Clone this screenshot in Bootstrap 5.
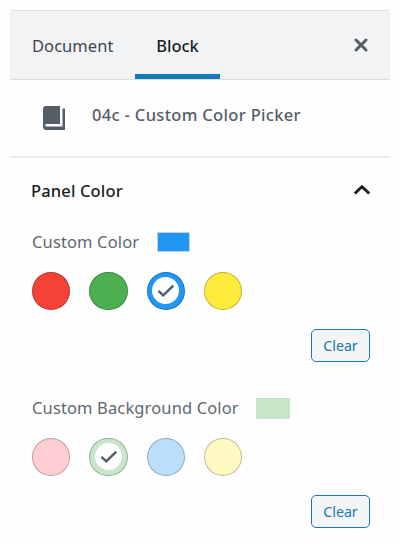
<!DOCTYPE html>
<html lang="en">
<head>
<meta charset="utf-8">
<meta name="viewport" content="width=device-width, initial-scale=1">
<title>Block settings</title>
<link href="https://cdn.jsdelivr.net/npm/bootstrap@5.3.0/dist/css/bootstrap.min.css" rel="stylesheet">
<style>
body{font-family:"Noto Sans","Open Sans",sans-serif;font-size:16.5px;color:#555d66;background:#fefefe;line-height:24px}
.sidebar{width:380px;margin:10px 0 0 10px}
.tabs{height:70px;background:#f2f3f5;border-top:1px solid #e0e2e5;border-bottom:1px solid #dcdee1}
.tab-btn{border:0;background:none;padding:2px 0 0;color:#40464d;text-align:left}
.tab-doc{width:125px;padding-left:22px;letter-spacing:.05px}
.tab-block{width:85px;padding-top:7px;text-align:center;color:#191e23;font-weight:500;border-bottom:5px solid #117cb8}
.close-btn{border:0;background:none;padding:0;margin-right:21px}
.block-info{height:78px;border-bottom:2px solid #ebebec;padding-left:33px}
.block-name{font-size:16.5px;font-weight:500;line-height:24px;letter-spacing:.33px;margin:-6px 0 0 27px;color:#555d66}
.panel-toggle{height:66px;padding:0 20px 0 21px;border:0;background:none;color:#191e23;font-weight:500;letter-spacing:.15px}
.panel-toggle svg{margin-top:-3px}
.setting{height:166px;padding:6px 20px 0 22px}
.setting-label{height:24px;color:#606870;letter-spacing:.13px}
.indicator{width:33px;height:20px;margin-left:18px;border:1px solid #bcd2e6}
.indicator-lg{width:34px;height:21px;margin-left:17px;border-color:#c8e4c9}
.swatches{margin-top:17.5px;gap:19.1px}
.swatch{width:38.3px;height:38.3px;border:1.4px solid rgba(0,0,0,.24);padding:0}
.swatch svg{width:27px;height:27px}
.clear-btn{width:59px;height:33px;margin-top:19.2px;padding:0;border:1.5px solid #1878b0;border-radius:5px;background:#f4f5f6;color:#1878b0;font-size:14.2px}
</style>
</head>
<body>
<main class="sidebar">
  <div class="tabs d-flex">
    <button class="tab-btn tab-doc">Document</button>
    <button class="tab-btn tab-block">Block</button>
    <button class="close-btn ms-auto" aria-label="Close"><svg class="d-block" width="16" height="16" viewBox="0 0 16 16"><path d="M3 3l10 10M13 3L3 13" stroke="#555d66" stroke-width="3" stroke-linecap="round"/></svg></button>
  </div>
  <section class="block-info d-flex align-items-center">
    <svg width="22" height="26" viewBox="0 0 22 26"><path d="M3 1H17V19H3.500a1 1 0 0 0 0 2.500H19.500V3.500H22V25H3.500Q0 25 0 21.500V4Q0 1 3 1Z" fill="#555d66"/></svg>
    <h1 class="block-name">04c - Custom Color Picker</h1>
  </section>
  <button class="panel-toggle w-100 d-flex align-items-center justify-content-between"><span>Panel Color</span>
    <svg width="16" height="10" viewBox="0 0 16 10"><path d="M.8 8.500L8 1.700l7.200 6.800" fill="none" stroke="#191e23" stroke-width="2.800"/></svg>
  </button>
  <section class="setting">
    <div class="setting-label d-flex align-items-center"><span>Custom Color</span><span class="indicator" style="background:#2196f3"></span></div>
    <div class="swatches d-flex">
      <button class="swatch rounded-circle" style="background:#f44336" aria-label="Red"></button>
      <button class="swatch rounded-circle" style="background:#4caf50" aria-label="Green"></button>
      <button class="swatch rounded-circle d-flex align-items-center justify-content-center" style="background:#2196f3" aria-label="Blue"><svg viewBox="0 0 27 27"><circle cx="13.500" cy="13.500" r="13.500" fill="#fefefe"/><path d="M6.500 13.800l4.700 4.500L21.300 8.600" fill="none" stroke="#555d66" stroke-width="2.500"/></svg></button>
      <button class="swatch rounded-circle" style="background:#ffeb3b" aria-label="Yellow"></button>
    </div>
    <button class="btn clear-btn d-block ms-auto">Clear</button>
  </section>
  <section class="setting">
    <div class="setting-label d-flex align-items-center"><span>Custom Background Color</span><span class="indicator indicator-lg" style="background:#c8e6c9"></span></div>
    <div class="swatches d-flex">
      <button class="swatch rounded-circle" style="background:#ffcdd2" aria-label="Light red"></button>
      <button class="swatch rounded-circle d-flex align-items-center justify-content-center" style="background:#c8e6c9" aria-label="Light green"><svg viewBox="0 0 27 27"><circle cx="13.500" cy="13.500" r="13.500" fill="#fefefe"/><path d="M6.500 13.800l4.700 4.500L21.300 8.600" fill="none" stroke="#555d66" stroke-width="2.500"/></svg></button>
      <button class="swatch rounded-circle" style="background:#bbdefb" aria-label="Light blue"></button>
      <button class="swatch rounded-circle" style="background:#fff9c4" aria-label="Light yellow"></button>
    </div>
    <button class="btn clear-btn d-block ms-auto">Clear</button>
  </section>
</main>
<script src="https://cdn.jsdelivr.net/npm/bootstrap@5.3.0/dist/js/bootstrap.bundle.min.js"></script>
</body>
</html>
